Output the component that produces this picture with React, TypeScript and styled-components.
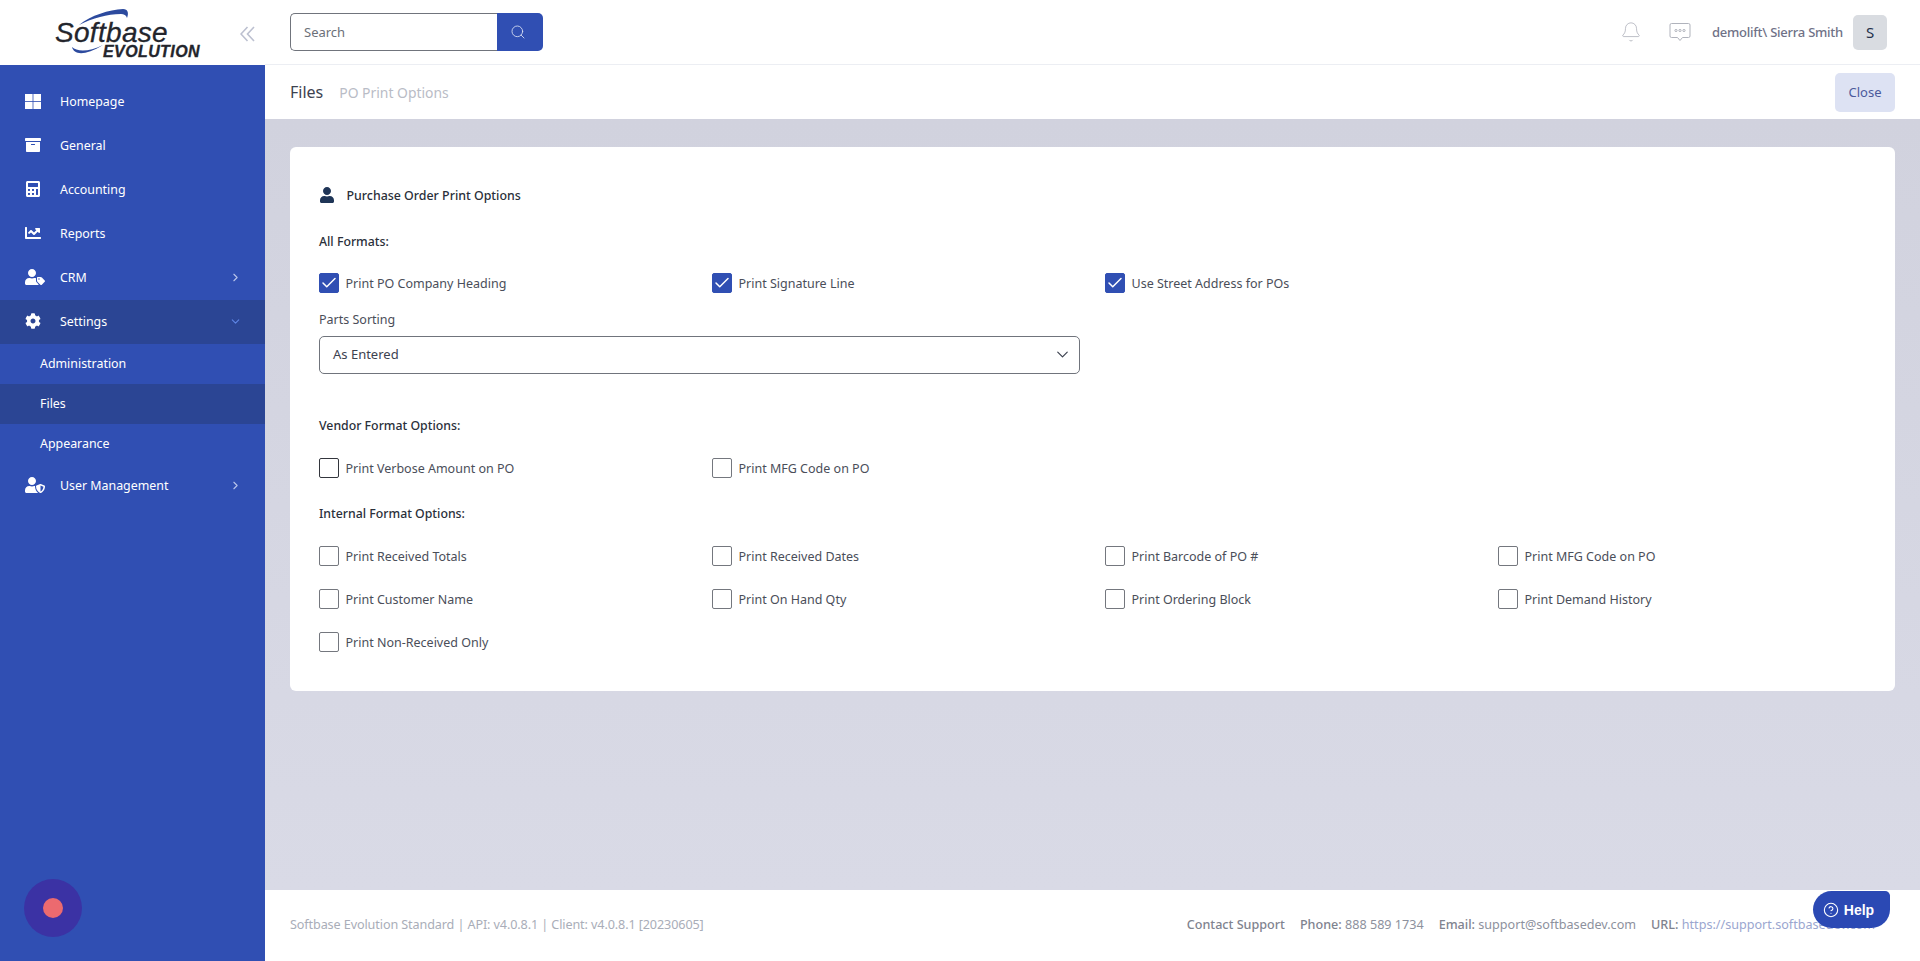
import React from "react";
import styled, { createGlobalStyle } from "styled-components";
import { FaArchive, FaCalculator, FaChartLine, FaUserTag, FaCog, FaUserShield, FaUser } from "react-icons/fa";
import { Search, Bell, ChevronRight, ChevronDown, Check, CircleHelp } from "lucide-react";

const Global = createGlobalStyle`
  html, body { margin: 0; padding: 0; height: 100%; }
  body { font-family: "Noto Sans", "Open Sans", sans-serif; background: #d9dae6; overflow: hidden; }
  * { box-sizing: border-box; }
`;

const Page = styled.div`
  display: flex;
  width: 1920px;
  height: 961px;
  position: relative;
`;

const Sidebar = styled.aside`
  width: 265px;
  flex: none;
  display: flex;
  flex-direction: column;
  background: #304fb3;
  position: relative;
`;

const Brand = styled.div`
  height: 65px;
  flex: none;
  background: #fff;
  display: flex;
  align-items: flex-start;
  padding: 8px 0 0 55px;
  position: relative;
`;

const LogoBox = styled.div`
  position: relative;
  width: 148px;
  height: 52px;
`;

const LogoMain = styled.span`
  position: absolute;
  left: 0;
  top: 11px;
  font-family: "Liberation Sans", sans-serif;
  font-style: italic;
  font-size: 28px;
  letter-spacing: 0.3px;
  line-height: 28px;
  -webkit-text-stroke: 0.3px #23252c;
  color: #23252c;
`;

const LogoSub = styled.span`
  position: absolute;
  left: 48px;
  top: 35px;
  font-family: "Liberation Sans", sans-serif;
  font-style: italic;
  font-weight: 700;
  font-size: 16px;
  line-height: 18px;
  letter-spacing: 0.4px;
  -webkit-text-stroke: 0.3px #23252c;
  color: #23252c;
`;

const Swoosh = styled.svg`
  position: absolute;
  inset: 0;
`;

const CollapseBtn = styled.span`
  position: absolute;
  left: 240px;
  top: 26px;
  display: flex;
  color: #bcc0d0;
`;

const Nav = styled.nav`
  display: flex;
  flex-direction: column;
  padding-top: 15px;
`;

const NavItem = styled.div<{ $active?: boolean }>`
  height: 44px;
  display: flex;
  align-items: center;
  padding: 0 24px 2px 25px;
  color: #fff;
  font-size: 12.4px;
  background: ${(p) => (p.$active ? "#2b4594" : "transparent")};
`;

const NavIcon = styled.span`
  width: 35px;
  flex: none;
  display: flex;
  align-items: center;
`;

const NavLabel = styled.span`
  flex: 1;
`;

const NavCaret = styled.span<{ $open?: boolean }>`
  display: flex;
  margin-right: -1px;
  color: ${(p) => (p.$open ? "#5f86e6" : "#b9c5ea")};
`;

const SubItem = styled.div<{ $active?: boolean }>`
  height: 40px;
  display: flex;
  align-items: center;
  padding: 0 0 2px 40px;
  color: #fff;
  font-size: 12.4px;
  background: ${(p) => (p.$active ? "#2b4594" : "transparent")};
`;

const RecordOuter = styled.div`
  position: absolute;
  left: 24px;
  top: 879px;
  width: 58px;
  height: 58px;
  border-radius: 50%;
  background: #3b32a4;
  display: flex;
  align-items: center;
  justify-content: center;
`;

const RecordDot = styled.div`
  width: 20px;
  height: 20px;
  border-radius: 50%;
  background: #ec6a6f;
`;

const Main = styled.main`
  flex: 1;
  min-width: 0;
  display: flex;
  flex-direction: column;
`;

const TopBar = styled.header`
  height: 65px;
  flex: none;
  background: #fff;
  border-bottom: 1px solid #eceef3;
  display: flex;
  align-items: center;
  padding: 0 33px 0 25px;
`;

const SearchBox = styled.div`
  display: flex;
  width: 253px;
  height: 38px;
  margin-top: -1px;
`;

const SearchInput = styled.div`
  flex: 1;
  border: 1px solid #70747c;
  border-right: none;
  border-radius: 5px 0 0 5px;
  display: flex;
  align-items: center;
  padding: 1px 0 0 13px;
  font-size: 13px;
  color: #6c7079;
`;

const SearchBtn = styled.div`
  width: 46px;
  background: #304fb3;
  border-radius: 0 5px 5px 0;
  display: flex;
  align-items: center;
  justify-content: center;
  padding-right: 5px;
  color: #d7def3;
`;

const TopRight = styled.div`
  margin-left: auto;
  display: flex;
  align-items: center;
`;

const BellIcon = styled.span`
  display: flex;
  color: #b0b3bc;
  margin-right: 27px;
`;

const ChatBubble = styled.span`
  display: flex;
  color: #b0b3bc;
  margin-right: 21px;
`;

const UserName = styled.span`
  font-size: 13px;
  font-weight: 500;
  color: #6f7287;
  margin: 0 10px 0 0;
  letter-spacing: -0.25px;
`;

const Avatar = styled.div`
  width: 34px;
  height: 35px;
  border-radius: 5px;
  background: #d9dce1;
  color: #23304a;
  display: flex;
  align-items: center;
  justify-content: center;
  font-size: 15px;
`;

const SubBar = styled.div`
  height: 54px;
  flex: none;
  background: #fff;
  display: flex;
  align-items: center;
  padding: 0 25px;
`;

const Crumb = styled.span`
  font-size: 16px;
  color: #3d4250;
  margin-right: 16px;
`;

const CrumbMuted = styled.span`
  font-size: 13.9px;
  color: #b9bcc6;
`;

const CloseBtn = styled.div`
  margin-left: auto;
  width: 60px;
  height: 39px;
  border-radius: 5px;
  background: #dde2f3;
  color: #4c5b9c;
  font-size: 13px;
  display: flex;
  align-items: center;
  justify-content: center;
`;

const Content = styled.div`
  flex: 1;
  min-height: 0;
  padding: 28px 25px 0;
  background: linear-gradient(#d1d2de, #d9dae6);
`;

const Card = styled.section`
  height: 544px;
  background: #fff;
  border-radius: 6px;
  padding: 0 29px;
`;

const CardTitle = styled.div`
  height: 96px;
  display: flex;
  align-items: center;
  font-size: 12.4px;
  font-weight: 500;
  color: #2a2f3a;
`;

const TitleIcon = styled.span`
  display: flex;
  width: 27.5px;
  color: #1f3557;
`;

const SectionTitle = styled.div<{ $top: number }>`
  height: 20px;
  margin-top: ${(p) => p.$top}px;
  display: flex;
  align-items: center;
  font-size: 12.3px;
  font-weight: 500;
  color: #2a2f3a;
`;

const Grid = styled.div<{ $top: number }>`
  display: grid;
  grid-template-columns: repeat(4, 368px);
  column-gap: 25px;
  row-gap: 23px;
  margin-top: ${(p) => p.$top}px;
`;

const CheckRow = styled.label`
  display: flex;
  align-items: center;
  height: 20px;
  font-size: 12.5px;
  color: #4a4e59;
`;

const Box = styled.span<{ $checked?: boolean; $dark?: boolean }>`
  width: 20px;
  height: 20px;
  flex: none;
  margin: 0 6.5px 0 0;
  border-radius: 2px;
  display: flex;
  align-items: center;
  justify-content: center;
  color: #fff;
  background: ${(p) => (p.$checked ? "#304fb3" : "#fff")};
  border: 1px solid ${(p) => (p.$checked ? "#304fb3" : p.$dark ? "#33363d" : "#74777e")};
`;

const FieldLabel = styled.div`
  margin-top: 16px;
  height: 20px;
  display: flex;
  align-items: center;
  font-size: 12.5px;
  color: #4a4e59;
`;

const Select = styled.div`
  margin-top: 7px;
  width: 761px;
  height: 38px;
  border: 1px solid #70747c;
  border-radius: 5px;
  display: flex;
  align-items: center;
  justify-content: space-between;
  padding: 0 7px 3px 13px;
  font-size: 13px;
  color: #3d4250;
`;

const SelectCaret = styled.span`
  display: flex;
  margin-top: 2px;
`;

const Footer = styled.footer`
  height: 71px;
  flex: none;
  background: #fff;
  display: flex;
  align-items: center;
  padding: 0 45px 0 25px;
  font-size: 12.6px;
  color: #a9adb8;
`;

const FootLeft = styled.span`
  letter-spacing: -0.1px;
  margin-top: -3px;
`;

const FootRight = styled.div`
  margin-left: auto;
  display: flex;
  gap: 15px;
  margin-top: -3px;
  color: #8d919d;
  white-space: nowrap;
`;

const FootKey = styled.b`
  font-weight: 500;
  color: #7f838f;
`;

const FootLink = styled.span`
  color: #9aa6cf;
`;

const HelpBtn = styled.div`
  position: absolute;
  left: 1813px;
  top: 891px;
  width: 77px;
  height: 37px;
  padding-right: 6px;
  border-radius: 19px 5px 19px 19px;
  background: #2b49b4;
  color: #fff;
  font-family: "Liberation Sans", sans-serif;
  font-weight: 700;
  font-size: 14px;
  display: flex;
  align-items: center;
  justify-content: center;
  gap: 5px;
`;

const GridIcon = () => (
  <svg width="16" height="15" viewBox="0 0 16 15" fill="currentColor">
    <rect x="0" y="0" width="7.6" height="7.1" />
    <rect x="8.4" y="0" width="7.6" height="7.1" />
    <rect x="0" y="7.9" width="7.6" height="7.1" />
    <rect x="8.4" y="7.9" width="7.6" height="7.1" />
  </svg>
);

const DoubleChevron = () => (
  <svg width="15" height="16" viewBox="0 0 15 16" fill="none" stroke="currentColor" strokeWidth="1.6">
    <path d="M7.5 1 L1 8 L7.5 15 M14 1 L7.5 8 L14 15" />
  </svg>
);

const ChatIcon = () => (
  <svg width="22" height="20" viewBox="0 0 22 20" fill="none" stroke="currentColor" strokeWidth="1">
    <path d="M2.5 1.5h17a1.5 1.5 0 0 1 1.5 1.5v11a1.5 1.5 0 0 1-1.5 1.5h-6L11 18.5 8.5 15.5h-6A1.5 1.5 0 0 1 1 14V3a1.5 1.5 0 0 1 1.5-1.5z" />
    <circle cx="7" cy="8.5" r="1.1" />
    <circle cx="11" cy="8.5" r="1.1" />
    <circle cx="15" cy="8.5" r="1.1" />
  </svg>
);

type Opt = { label: string; checked?: boolean; dark?: boolean };

const Options = ({ items, top }: { items: Opt[]; top: number }) => (
  <Grid $top={top}>
    {items.map((o, i) => (
      <CheckRow key={i}>
        <Box $checked={o.checked} $dark={o.dark}>
          {o.checked && <Check size={18} strokeWidth={2} />}
        </Box>
        {o.label}
      </CheckRow>
    ))}
  </Grid>
);

export default function App() {
  return (
    <Page>
      <Global />
      <Sidebar>
        <Brand>
          <LogoBox>
            <Swoosh width="148" height="52" viewBox="0 0 148 52">
              <path d="M24 17 C36 7 54 2 68 1 C73 1 74 5 72 10 C71 7 69 6 66 6 C52 6 38 10 24 17 Z" fill="#2c4a9e" />
              <path d="M17 39 C19 47 30 48 48 37 C34 44 22 44 17 39 Z" fill="#2c4a9e" />
            </Swoosh>
            <LogoMain>Softbase</LogoMain>
            <LogoSub>EVOLUTION</LogoSub>
          </LogoBox>
          <CollapseBtn>
            <DoubleChevron />
          </CollapseBtn>
        </Brand>
        <Nav>
          <NavItem><NavIcon><GridIcon /></NavIcon><NavLabel>Homepage</NavLabel></NavItem>
          <NavItem><NavIcon><FaArchive size={16} /></NavIcon><NavLabel>General</NavLabel></NavItem>
          <NavItem><NavIcon><FaCalculator size={16} /></NavIcon><NavLabel>Accounting</NavLabel></NavItem>
          <NavItem><NavIcon><FaChartLine size={16} /></NavIcon><NavLabel>Reports</NavLabel></NavItem>
          <NavItem><NavIcon><FaUserTag size={20} /></NavIcon><NavLabel>CRM</NavLabel><NavCaret><ChevronRight size={13} /></NavCaret></NavItem>
          <NavItem $active><NavIcon><FaCog size={16} /></NavIcon><NavLabel>Settings</NavLabel><NavCaret $open><ChevronDown size={13} /></NavCaret></NavItem>
          <SubItem>Administration</SubItem>
          <SubItem $active>Files</SubItem>
          <SubItem>Appearance</SubItem>
          <NavItem><NavIcon><FaUserShield size={20} /></NavIcon><NavLabel>User Management</NavLabel><NavCaret><ChevronRight size={13} /></NavCaret></NavItem>
        </Nav>
        <RecordOuter><RecordDot /></RecordOuter>
      </Sidebar>
      <Main>
        <TopBar>
          <SearchBox>
            <SearchInput>Search</SearchInput>
            <SearchBtn><Search size={16} strokeWidth={1.3} /></SearchBtn>
          </SearchBox>
          <TopRight>
            <BellIcon><Bell size={22} strokeWidth={0.9} /></BellIcon>
            <ChatBubble><ChatIcon /></ChatBubble>
            <UserName>demolift\ Sierra Smith</UserName>
            <Avatar>S</Avatar>
          </TopRight>
        </TopBar>
        <SubBar>
          <Crumb>Files</Crumb>
          <CrumbMuted>PO Print Options</CrumbMuted>
          <CloseBtn>Close</CloseBtn>
        </SubBar>
        <Content>
          <Card>
            <CardTitle>
              <TitleIcon><FaUser size={16} /></TitleIcon>
              Purchase Order Print Options
            </CardTitle>
            <SectionTitle $top={-12}>All Formats:</SectionTitle>
            <Options
              top={22}
              items={[
                { label: "Print PO Company Heading", checked: true },
                { label: "Print Signature Line", checked: true },
                { label: "Use Street Address for POs", checked: true },
              ]}
            />
            <FieldLabel>Parts Sorting</FieldLabel>
            <Select>
              As Entered
              <SelectCaret><ChevronDown size={19} strokeWidth={1.5} /></SelectCaret>
            </Select>
            <SectionTitle $top={41}>Vendor Format Options:</SectionTitle>
            <Options
              top={23}
              items={[
                { label: "Print Verbose Amount on PO", dark: true },
                { label: "Print MFG Code on PO" },
              ]}
            />
            <SectionTitle $top={25}>Internal Format Options:</SectionTitle>
            <Options
              top={23}
              items={[
                { label: "Print Received Totals" },
                { label: "Print Received Dates" },
                { label: "Print Barcode of PO #" },
                { label: "Print MFG Code on PO" },
                { label: "Print Customer Name" },
                { label: "Print On Hand Qty" },
                { label: "Print Ordering Block" },
                { label: "Print Demand History" },
                { label: "Print Non-Received Only" },
              ]}
            />
          </Card>
        </Content>
        <Footer>
          <FootLeft>Softbase Evolution Standard | API: v4.0.8.1 | Client: v4.0.8.1 [20230605]</FootLeft>
          <FootRight>
            <FootKey>Contact Support</FootKey>
            <span><FootKey>Phone:</FootKey> 888 589 1734</span>
            <span><FootKey>Email:</FootKey> support@softbasedev.com</span>
            <span><FootKey>URL:</FootKey> <FootLink>https://support.softbasedev.com</FootLink></span>
          </FootRight>
        </Footer>
      </Main>
      <HelpBtn><CircleHelp size={16} strokeWidth={1.6} />Help</HelpBtn>
    </Page>
  );
}
